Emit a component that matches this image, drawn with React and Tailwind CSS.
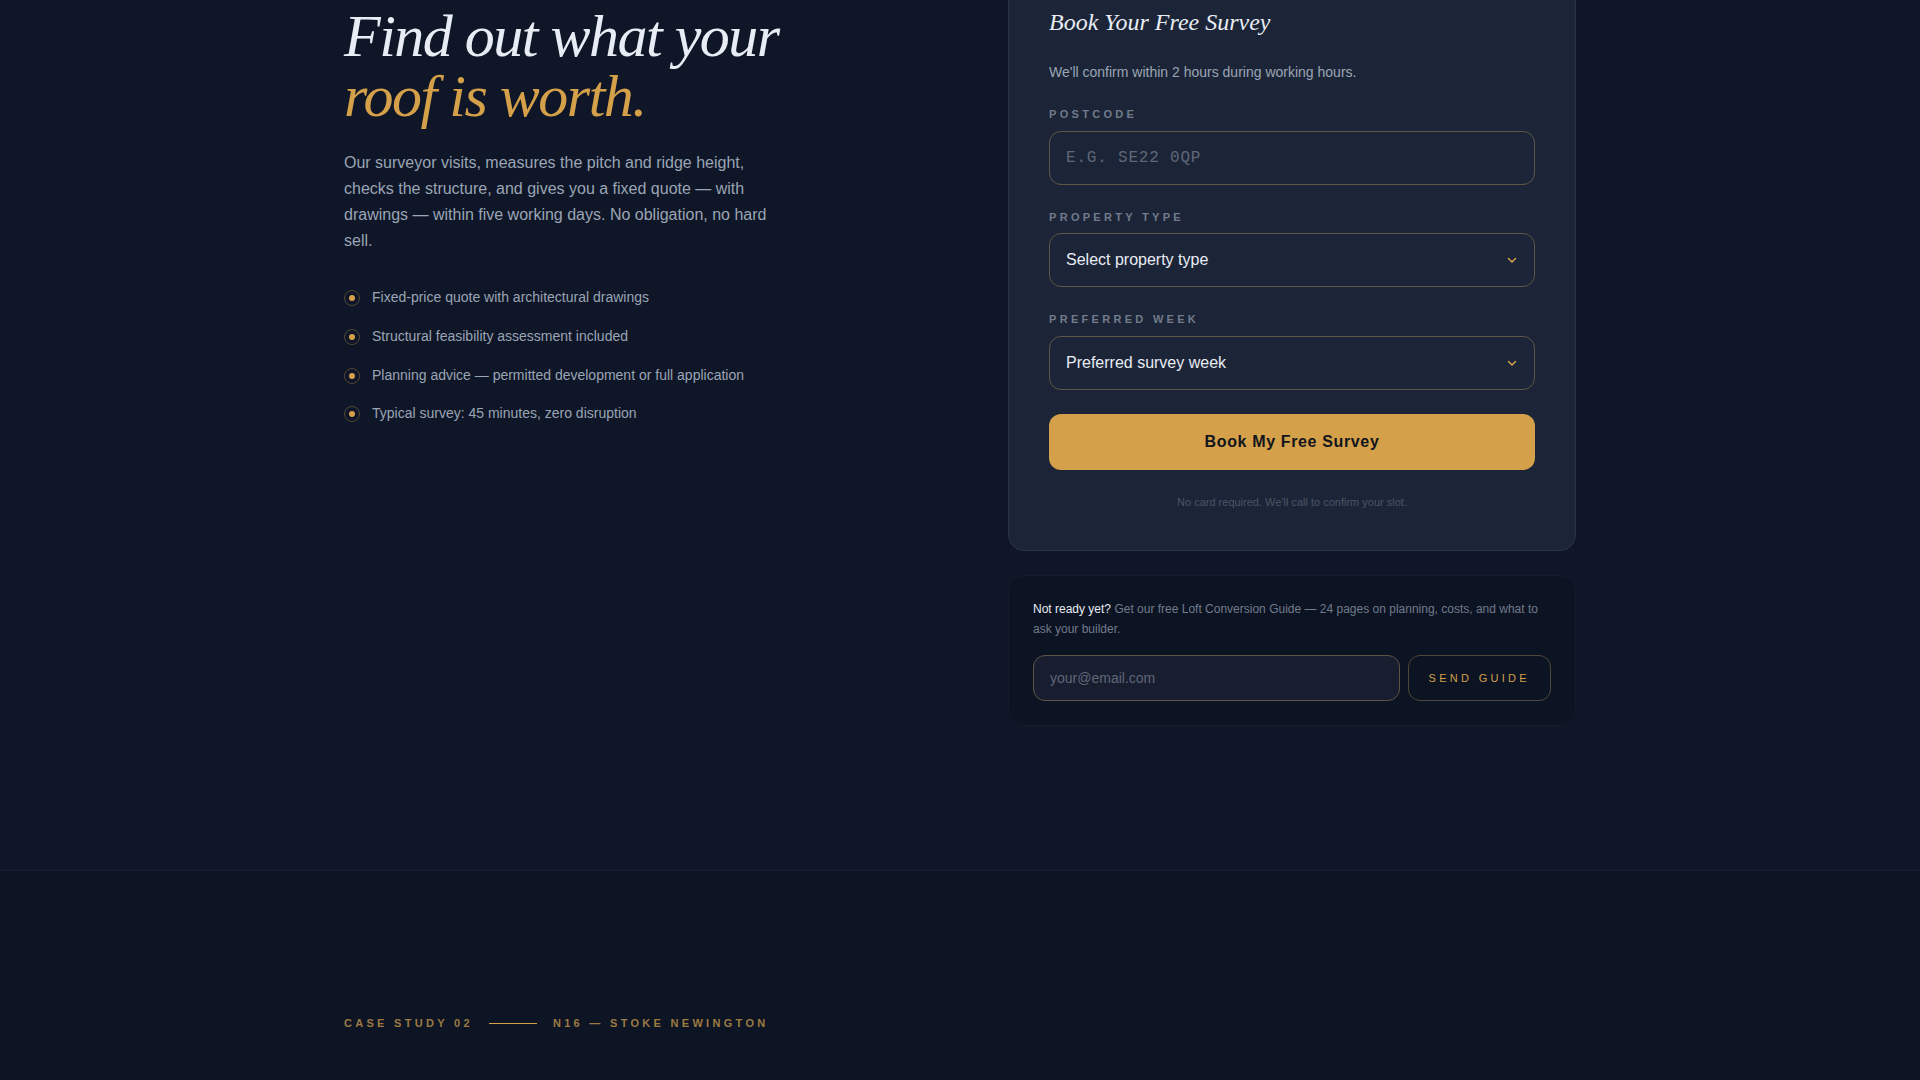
import { useState } from 'react';

const points = [
  'Fixed-price quote with architectural drawings',
  'Structural feasibility assessment included',
  'Planning advice — permitted development or full application',
  'Typical survey: 45 minutes, zero disruption'
];

const propertyTypes = ['Terraced house', 'Semi-detached house', 'Detached house', 'Bungalow'];
const surveyWeeks = ['This week', 'Next week', 'In two weeks', 'In a month'];

const labelClass = 'block text-[11px] leading-normal font-bold uppercase tracking-[0.3em] text-[#717b8c]';
const fieldClass = 'block w-full h-[54px] px-4 rounded-xl border border-[#5e5644] bg-transparent text-base focus:outline-none focus:border-[#d4a04a]';

function SelectField({ id, label, placeholder, options, value, onChange }) {
  return (
    <div className="flex flex-col gap-2">
      <label htmlFor={id} className={labelClass}>{label}</label>
      <div className="relative">
        <select
          id={id}
          value={value}
          onChange={(e) => onChange(e.target.value)}
          className={`${fieldClass} appearance-none text-[#e8edf5]`}
        >
          <option value="">{placeholder}</option>
          {options.map((option) => (
            <option key={option} value={option}>{option}</option>
          ))}
        </select>
        <svg
          className="absolute right-[17px] inset-y-0 my-auto size-3 pointer-events-none text-[#d4a04a]"
          viewBox="0 0 12 12"
          fill="none"
          stroke="currentColor"
          strokeWidth="1.5"
          strokeLinecap="round"
          strokeLinejoin="round"
          aria-hidden="true"
        >
          <path d="M2.5 4.5L6 8l3.5-3.5" />
        </svg>
      </div>
    </div>
  );
}

function SurveyForm() {
  const [formData, setFormData] = useState({ postcode: '', propertyType: '', week: '' });

  return (
    <form
      onSubmit={(e) => e.preventDefault()}
      className="flex flex-col gap-6 p-10 rounded-2xl border border-[#2b3446] bg-[#1c2537]"
    >
      <h3 className="font-['Liberation_Serif',serif] italic text-2xl leading-[34px] text-[#e8edf5]">Book Your Free Survey</h3>
      <p className="text-sm leading-[19px] text-[#9aa5b5]">We'll confirm within 2 hours during working hours.</p>

      <div className="flex flex-col gap-2">
        <label htmlFor="postcode" className={labelClass}>Postcode</label>
        <input
          id="postcode"
          type="text"
          value={formData.postcode}
          onChange={(e) => setFormData({ ...formData, postcode: e.target.value })}
          placeholder="e.g. SE22 0QP"
          className={`${fieldClass} font-['Liberation_Mono',monospace] uppercase tracking-wider text-[#e8edf5] placeholder:text-[#5f6778]`}
        />
      </div>

      <SelectField
        id="property-type"
        label="Property type"
        placeholder="Select property type"
        options={propertyTypes}
        value={formData.propertyType}
        onChange={(propertyType) => setFormData({ ...formData, propertyType })}
      />
      <SelectField
        id="week"
        label="Preferred week"
        placeholder="Preferred survey week"
        options={surveyWeeks}
        value={formData.week}
        onChange={(week) => setFormData({ ...formData, week })}
      />

      <button
        type="submit"
        className="h-14 rounded-xl bg-[#d4a04a] hover:bg-[#e0b060] text-base font-bold tracking-[0.04em] text-[#12151c]"
      >
        Book My Free Survey
      </button>
      <p className="text-[11px] leading-normal text-center text-[#4b5466]">
        No card required. We'll call to confirm your slot.
      </p>
    </form>
  );
}

function GuideForm() {
  const [email, setEmail] = useState('');

  return (
    <form
      onSubmit={(e) => e.preventDefault()}
      className="flex flex-col gap-4 p-6 rounded-2xl border border-[#141b2d] bg-[#0c1322]"
    >
      <p className="text-xs leading-relaxed text-[#717b8c]">
        <span className="text-[#e8edf5]">Not ready yet?</span> Get our free Loft Conversion Guide — 24 pages on planning, costs, and what to ask your builder.
      </p>
      <div className="flex gap-2">
        <input
          type="email"
          aria-label="Email address"
          value={email}
          onChange={(e) => setEmail(e.target.value)}
          placeholder="your@email.com"
          className="flex-1 min-w-0 h-[46px] px-4 rounded-xl border border-[#5e5644] bg-[#181e2f] text-sm text-[#e8edf5] placeholder:text-[#5f6778] focus:outline-none focus:border-[#d4a04a]"
        />
        <button
          type="submit"
          className="px-5 rounded-xl border border-[#4f4838] text-[11px] uppercase tracking-[0.3em] text-[#d4a04a] hover:border-[#d4a04a]"
        >
          Send guide
        </button>
      </div>
    </form>
  );
}

function App() {
  return (
    <main className="min-h-screen overflow-hidden bg-[#0f1627] font-['Liberation_Sans',sans-serif]">
      <section className="-mt-9 pb-36">
        <div className="max-w-7xl mx-auto px-6 grid grid-cols-1 lg:grid-cols-2 gap-24">
          <div className="pt-[42px]">
            <h2 className="mb-6 font-['Liberation_Serif',serif] italic text-6xl leading-none tracking-tight text-[#e8edf5]">
              Find out what your
              <br />
              <span className="text-[#d4a04a]">roof is worth.</span>
            </h2>
            <p className="mb-8 max-w-md text-base leading-relaxed text-[#9aa5b5]">
              Our surveyor visits, measures the pitch and ridge height, checks the structure, and gives you a fixed quote — with drawings — within five working days. No obligation, no hard sell.
            </p>
            <ul className="flex flex-col gap-4">
              {points.map((point) => (
                <li key={point} className="flex items-start gap-3 text-sm leading-relaxed text-[#9aa5b5]">
                  <span className="mt-1 size-4 shrink-0 flex items-center justify-center rounded-full border border-[#4f4838]">
                    <span className="size-1.5 rounded-full bg-[#d4a04a]" />
                  </span>
                  {point}
                </li>
              ))}
            </ul>
          </div>

          <div className="flex flex-col gap-6">
            <SurveyForm />
            <GuideForm />
          </div>
        </div>
      </section>

      <section className="min-h-[210px] pt-36 border-t border-[#1b2232] bg-[#0d1424]">
        <div className="max-w-7xl mx-auto px-6 flex items-center gap-4 text-[11px] leading-normal font-bold uppercase tracking-[0.3em] text-[#9c7a42]">
          <span>Case study 02</span>
          <span className="w-12 h-px bg-[#d4a04a]" />
          <span>N16 — Stoke Newington</span>
        </div>
      </section>
    </main>
  );
}

export default App;
